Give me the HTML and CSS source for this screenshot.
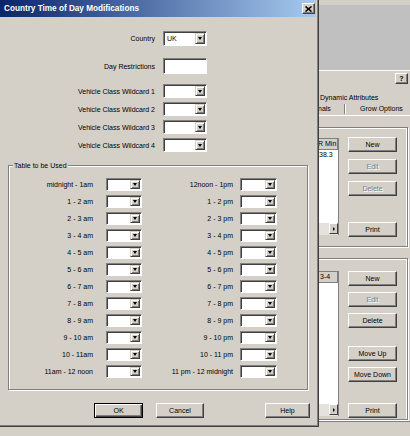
FILE: index.html
```html
<!DOCTYPE html>
<html>
<head>
<meta charset="utf-8">
<title>Country Time of Day Modifications</title>
<link rel="stylesheet" href="styles.css">
</head>
<body>
<div class="desktop">
  <div class="backwin">
    <div class="bw-strip"></div>
    <div class="bw-gray"></div>
    <div class="bw-window">
      <div class="bw-caption"><span class="capbtn">?</span></div>
      <div class="bw-tabs">
        <div class="tabrow1">Dynamic Attributes</div>
        <div class="tabrow2"><span class="tab-a">nals</span><span class="tab-sep"></span><span class="tab-b">Grow Options</span></div>
      </div>
      <div class="bw-group g1">
        <div class="listcol">
          <div class="listbox lb1"><div class="lb-head">R Min</div><div class="lb-item">38.3</div></div>
          <div class="hscroll"><span class="sarrow"></span></div>
        </div>
        <div class="btncol">
          <button class="btn bbtn">New</button>
          <button class="btn bbtn disabled s7">Edit</button>
          <button class="btn bbtn disabled s7">Delete</button>
          <button class="btn bbtn s26">Print</button>
        </div>
      </div>
      <div class="bw-group g2">
        <div class="listcol">
          <div class="listbox lb2"><div class="lb-head">3-4</div></div>
          <div class="hscroll"><span class="sarrow"></span></div>
        </div>
        <div class="btncol">
          <button class="btn bbtn">New</button>
          <button class="btn bbtn disabled s6">Edit</button>
          <button class="btn bbtn s6">Delete</button>
          <button class="btn bbtn s18">Move Up</button>
          <button class="btn bbtn s6">Move Down</button>
          <button class="btn bbtn s21">Print</button>
        </div>
      </div>
    </div>
  </div>

  <div class="dialog">
    <div class="titlebar">
      <span class="title">Country Time of Day Modifications</span>
      <span class="closebtn"><svg width="7" height="6" viewBox="0 0 7 6"><path d="M0.5 0.5 L6.5 5.5 M6.5 0.5 L0.5 5.5" stroke="#000" stroke-width="1.6"/></svg></span>
    </div>

    <div class="form">
      <div class="frow r-country"><span class="flabel">Country</span><span class="combo wide tall"><span class="val">UK</span><span class="dd"></span></span></div>
      <div class="frow r-day"><span class="flabel">Day Restrictions</span><span class="textbox"></span></div>
      <div class="frow r-w1"><span class="flabel">Vehicle Class Wildcard 1</span><span class="combo wide"><span class="val"></span><span class="dd"></span></span></div>
      <div class="frow r-w"><span class="flabel">Vehicle Class Wildcard 2</span><span class="combo wide"><span class="val"></span><span class="dd"></span></span></div>
      <div class="frow r-w"><span class="flabel">Vehicle Class Wildcard 3</span><span class="combo wide"><span class="val"></span><span class="dd"></span></span></div>
      <div class="frow r-w"><span class="flabel">Vehicle Class Wildcard 4</span><span class="combo wide"><span class="val"></span><span class="dd"></span></span></div>
    </div>

    <div class="tgroup">
      <span class="tg-title">Table to be Used</span>
      <div class="tgrid">
        <span class="tl">midnight - 1am</span><span class="combo"><span class="val"></span><span class="dd"></span></span><span class="tr">12noon - 1pm</span><span class="combo"><span class="val"></span><span class="dd"></span></span>
        <span class="tl">1 - 2 am</span><span class="combo"><span class="val"></span><span class="dd"></span></span><span class="tr">1 - 2 pm</span><span class="combo"><span class="val"></span><span class="dd"></span></span>
        <span class="tl">2 - 3 am</span><span class="combo"><span class="val"></span><span class="dd"></span></span><span class="tr">2 - 3 pm</span><span class="combo"><span class="val"></span><span class="dd"></span></span>
        <span class="tl">3 - 4 am</span><span class="combo"><span class="val"></span><span class="dd"></span></span><span class="tr">3 - 4 pm</span><span class="combo"><span class="val"></span><span class="dd"></span></span>
        <span class="tl">4 - 5 am</span><span class="combo"><span class="val"></span><span class="dd"></span></span><span class="tr">4 - 5 pm</span><span class="combo"><span class="val"></span><span class="dd"></span></span>
        <span class="tl">5 - 6 am</span><span class="combo"><span class="val"></span><span class="dd"></span></span><span class="tr">5 - 6 pm</span><span class="combo"><span class="val"></span><span class="dd"></span></span>
        <span class="tl">6 - 7 am</span><span class="combo"><span class="val"></span><span class="dd"></span></span><span class="tr">6 - 7 pm</span><span class="combo"><span class="val"></span><span class="dd"></span></span>
        <span class="tl">7 - 8 am</span><span class="combo"><span class="val"></span><span class="dd"></span></span><span class="tr">7 - 8 pm</span><span class="combo"><span class="val"></span><span class="dd"></span></span>
        <span class="tl">8 - 9 am</span><span class="combo"><span class="val"></span><span class="dd"></span></span><span class="tr">8 - 9 pm</span><span class="combo"><span class="val"></span><span class="dd"></span></span>
        <span class="tl">9 - 10 am</span><span class="combo"><span class="val"></span><span class="dd"></span></span><span class="tr">9 - 10 pm</span><span class="combo"><span class="val"></span><span class="dd"></span></span>
        <span class="tl">10 - 11am</span><span class="combo"><span class="val"></span><span class="dd"></span></span><span class="tr">10 - 11 pm</span><span class="combo"><span class="val"></span><span class="dd"></span></span>
        <span class="tl">11am - 12 noon</span><span class="combo"><span class="val"></span><span class="dd"></span></span><span class="tr">11 pm - 12 midnight</span><span class="combo"><span class="val"></span><span class="dd"></span></span>
      </div>
    </div>

    <div class="actions">
      <button class="btn default b-ok">OK</button>
      <button class="btn b-cancel">Cancel</button>
      <button class="btn b-help">Help</button>
    </div>
  </div>
</div>
</body>
</html>
```
FILE: styles.css
```css
* { box-sizing: border-box; }
html, body { margin: 0; padding: 0; }
body {
  width: 410px; height: 436px; overflow: hidden;
  font-family: "Liberation Sans", Arial, sans-serif;
  font-size: 7px; color: #000; background: #d4d0c8;
}
.desktop { position: relative; width: 410px; height: 436px; overflow: hidden; background: #d4d0c8; }

/* ---------- background window ---------- */
.backwin { position: absolute; left: 0; top: 0; width: 410px; height: 436px; display: flex; flex-direction: column; }
.bw-strip { height: 5px; background: #d4d0c8; flex: none; }
.bw-gray { height: 65px; background: #c0c0c0; flex: none; }
.bw-window {
  flex: none; height: 352px; background: #d4d0c8;
  border-top: 1px solid #fff; border-bottom: 1px solid #808080;
  display: flex; flex-direction: column;
}
.bw-caption { height: 14px; display: flex; justify-content: flex-end; align-items: flex-start; flex: none; }
.capbtn {
  width: 13px; height: 11px; margin-top: 2px; margin-right: 2px;
  background: #d4d0c8; border: 1px solid; border-color: #fff #404040 #404040 #fff;
  box-shadow: inset -1px -1px 0 #808080;
  font-weight: bold; font-size: 7px; line-height: 9px; text-align: center;
}
.bw-tabs { flex: none; border-bottom: 1px solid #fff; padding-left: 318px; }
.tabrow1 { margin-top: 8px; height: 10px; line-height: 10px; padding-left: 2px; }
.tabrow2 { height: 12px; line-height: 12px; display: flex; }
.tab-a { width: 26px; }
.tab-sep { width: 2px; margin: 1px 0; border-left: 1px solid #808080; border-right: 1px solid #fff; }
.tab-b { padding-left: 14px; }

.bw-group {
  flex: none; margin-left: 250px; width: 158px;
  border: 1px solid #808080; border-left: none;
  box-shadow: 1px 1px 0 #fff, inset 0 1px 0 #fff, inset -1px 0 0 #fff;
  display: flex;
}
.g1 { margin-top: 11px; height: 120px; padding-top: 10px; }
.g2 { margin-top: 11px; height: 162px; padding-top: 12px; }
.listcol { width: 89px; display: flex; flex-direction: column; }
.listbox {
  background: #fff; border-right: 1px solid #808080; border-top: 1px solid #808080;
}
.lb1 { height: 85px; }
.lb2 { height: 133px; }
.lb-head {
  height: 11px; line-height: 10px; background: #d4d0c8; padding-left: 68px;
  border-bottom: 1px solid #808080; border-right: 1px solid #808080;
}
.lb2 .lb-head { padding-left: 70px; }
.lb-item { padding-left: 69px; line-height: 9px; }
.hscroll {
  height: 12px; background: #e4e2dc; display: flex; justify-content: flex-end;
  border-right: 1px solid #808080;
}
.sarrow {
  width: 9px; height: 11px; background: #d4d0c8;
  border: 1px solid; border-color: #fff #404040 #404040 #fff;
  display: flex; align-items: center; justify-content: center;
}
.sarrow::after {
  content: ""; border-left: 2px solid #000;
  border-top: 2px solid transparent; border-bottom: 2px solid transparent;
}
.btncol { margin-left: 9px; display: flex; flex-direction: column; align-items: flex-start; }
.g1 .btncol { margin-top: -1px; }
.bbtn { width: 49px; }
.s6 { margin-top: 6px; }
.s7 { margin-top: 7px; }
.s18 { margin-top: 18px; }
.s21 { margin-top: 21px; }
.s26 { margin-top: 26px; }

/* ---------- buttons ---------- */
.btn {
  font-family: inherit; font-size: 7px; color: #000;
  height: 15px; padding: 0; line-height: 12px;
  background: #d4d0c8; border: 1px solid; border-color: #fff #404040 #404040 #fff;
  box-shadow: inset -1px -1px 0 #808080;
  flex: none;
}
.btn.default {
  border-color: #000;
  box-shadow: inset 1px 1px 0 #fff, inset -1px -1px 0 #404040, inset -2px -2px 0 #808080;
}
.btn.disabled { color: #808080; text-shadow: 1px 1px 0 #fff; }

/* ---------- dialog ---------- */
.dialog {
  position: absolute; left: 0; top: 0; width: 319px; height: 427px;
  background: #d4d0c8;
  border-right: 1px solid #404040; border-bottom: 1px solid #404040;
  box-shadow: inset -1px -1px 0 #808080;
  padding-right: 2px; padding-bottom: 2px;
  display: flex; flex-direction: column;
}
.titlebar {
  height: 17px; flex: none; display: flex; align-items: center;
  background: linear-gradient(to right, #0a246a, #a6caf0);
  padding-left: 4px;
}
.title { font-weight: bold; font-size: 8.2px; color: #fff; white-space: nowrap; }
.closebtn {
  margin-left: auto; margin-right: 1px; width: 13px; height: 11px;
  background: #d4d0c8; border: 1px solid; border-color: #fff #404040 #404040 #fff;
  box-shadow: inset -1px -1px 0 #808080;
  display: flex; align-items: center; justify-content: center;
}
.closebtn svg { display: block; }

.form { margin-top: 13px; display: flex; flex-direction: column; }
.frow { display: flex; align-items: center; }
.flabel { width: 155px; text-align: right; white-space: nowrap; }
.frow > .combo, .frow > .textbox { margin-left: 8px; }
.r-country { height: 16px; }
.r-day { height: 16px; margin-top: 12px; }
.r-w1 { height: 14px; margin-top: 10px; }
.r-w { height: 14px; margin-top: 4px; }

.combo {
  display: flex; background: #fff; height: 13px;
  border: 1px solid; border-color: #808080 #fff #fff #808080;
  box-shadow: inset 1px 1px 0 #404040;
  padding: 1px 1px 1px 2px;
}
.combo.wide { width: 44px; height: 14px; }
.combo.tall { height: 15px; }
.combo .val { flex: 1; line-height: 11px; padding-left: 1px; }
.combo .dd {
  width: 10px; flex: none; background: #d4d0c8;
  border: 1px solid; border-color: #d4d0c8 #404040 #404040 #d4d0c8;
  box-shadow: inset 1px 1px 0 #fff, inset -1px -1px 0 #808080;
  display: flex; align-items: center; justify-content: center;
}
.combo .dd::after {
  content: ""; border-top: 3px solid #000;
  border-left: 2.5px solid transparent; border-right: 2.5px solid transparent;
}
.textbox {
  width: 44px; height: 16px; background: #fff;
  border: 1px solid; border-color: #808080 #fff #fff #808080;
  box-shadow: inset 1px 1px 0 #404040;
}

.tgroup {
  position: relative; flex: none;
  margin-left: 8px; margin-top: 13px; width: 300px; height: 225px;
  border: 1px solid #808080;
  box-shadow: 1px 1px 0 #fff, inset 1px 1px 0 #fff;
  padding: 10px 0 0 1px;
}
.tg-title {
  position: absolute; left: 4px; top: -5px;
  background: #d4d0c8; padding: 0 1px; line-height: 9px;
}
.tgrid {
  display: grid;
  grid-template-columns: 96px 36px 98px 37px;
  grid-auto-rows: 17px;
  align-items: center;
}
.tl { text-align: right; padding-right: 13px; white-space: nowrap; }
.tr { text-align: right; padding-right: 7px; white-space: nowrap; }

.actions { flex: none; margin-top: 13px; display: flex; padding-left: 94px; }
.b-ok { width: 49px; }
.b-cancel { width: 48px; margin-left: 13px; }
.b-help { width: 45px; margin-left: 61px; }
```
